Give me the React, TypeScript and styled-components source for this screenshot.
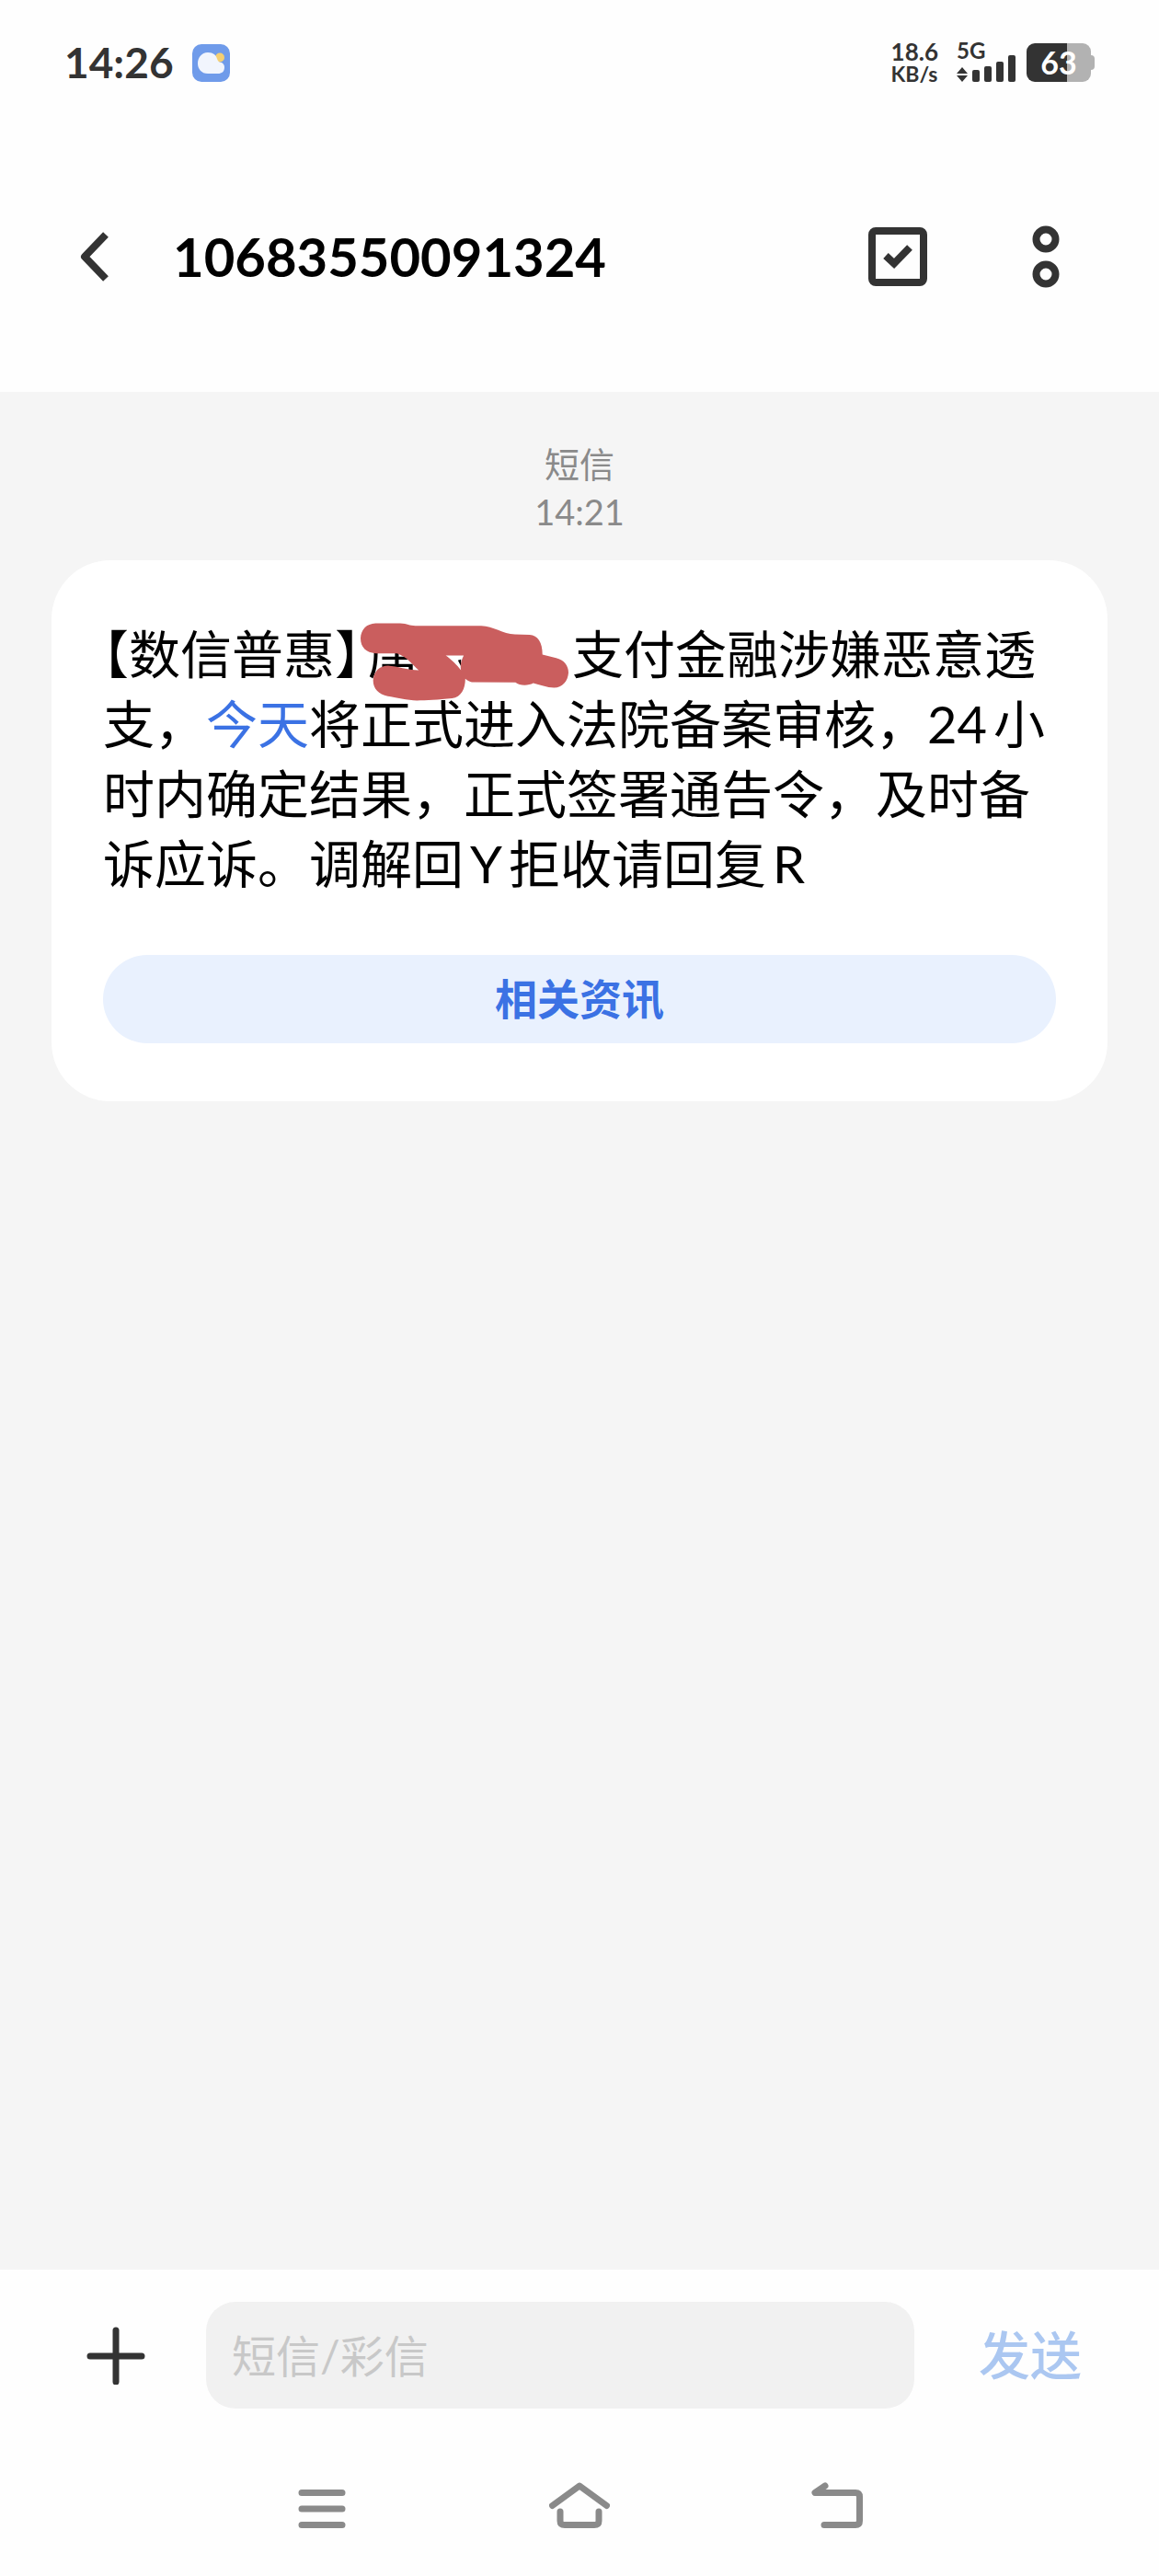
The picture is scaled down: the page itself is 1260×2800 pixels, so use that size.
import React from 'react';
import styled, { createGlobalStyle } from 'styled-components';

const GlobalStyle = createGlobalStyle`
  *, *::before, *::after { box-sizing: border-box; }
  html, body { margin: 0; padding: 0; }
  body {
    background: #fefefe;
    color: #000;
    font-family: Lato, 'Noto Sans CJK SC', sans-serif;
  }
  button, input { font: inherit; border: 0; margin: 0; padding: 0; background: none; }
`;

const Screen = styled.div`
  display: flex;
  flex-direction: column;
  min-height: 100vh;
`;

const StatusBar = styled.div`
  display: flex;
  align-items: center;
  justify-content: space-between;
  height: 136px;
  padding: 0 74px 0 70px;
  color: #333;
  font-weight: 700;
`;

const StatusGroup = styled.div<{ $gap: number }>`
  display: flex;
  align-items: center;
  gap: ${({ $gap }) => $gap}px;
`;

const Clock = styled.time`
  font-size: 46px;
  line-height: 56px;
`;

const Stack = styled.div`
  display: flex;
  flex-direction: column;
`;

const StatusText = styled.span<{ $size: number }>`
  font-size: ${({ $size }) => $size}px;
  line-height: 24px;
`;

const Battery = styled.div`
  position: relative;
  width: 70px;
  height: 42px;
  border-radius: 9px;
  background: linear-gradient(to right, #333 63%, #b2b2b2 63%);
  color: #fff;
  font-size: 34px;
  line-height: 42px;
  text-align: center;
  &::after {
    content: '';
    position: absolute;
    left: 70px;
    top: 13px;
    width: 4px;
    height: 16px;
    border-radius: 0 4px 4px 0;
    background: #b2b2b2;
  }
`;

const Header = styled.header`
  display: flex;
  align-items: center;
  height: 290px;
  padding: 0 91px 4px 70px;
`;

const IconButton = styled.button`
  display: flex;
  align-items: center;
  justify-content: center;
  width: 64px;
  height: 80px;
  flex: none;
`;

const Title = styled.h1`
  flex: 1;
  margin: 0 0 0 54px;
  font-size: 58px;
  line-height: 72px;
  font-weight: 700;
`;

const HeaderActions = styled.div`
  display: flex;
  gap: 97px;
`;

const Thread = styled.main`
  flex: 1;
  padding: 52px 56px;
  background: #f5f5f5;
`;

const Meta = styled.div`
  margin-bottom: 27px;
  color: #8a8a8a;
  font-size: 38px;
  line-height: 52px;
  text-align: center;
`;

const Bubble = styled.article`
  padding: 64px 56px 63px;
  border-radius: 64px;
  background: #fff;
`;

const MessageText = styled.p`
  margin: 0 0 61px;
  font-size: 56px;
  line-height: 76px;
  text-autospace: normal;
`;

const Sender = styled.span`
  font-feature-settings: 'halt';
`;

const DateLink = styled.a`
  color: #3b72e4;
  text-decoration: none;
`;

const Redacted = styled.span`
  position: relative;
  display: inline-block;
  width: 230px;
  height: 76px;
  padding-left: 8px;
  vertical-align: top;
`;

const Scribble = styled.svg`
  position: absolute;
  left: 0;
  top: 4px;
`;

const InfoButton = styled.button`
  display: block;
  width: 100%;
  height: 96px;
  border-radius: 48px;
  background: #e9f1fe;
  color: #3b72e4;
  font-size: 46px;
  line-height: 96px;
  font-weight: 700;
`;

const Composer = styled.form`
  display: flex;
  align-items: center;
  padding: 35px 84px 32px 94px;
`;

const MessageInput = styled.input`
  flex: 1;
  min-width: 0;
  height: 116px;
  margin: 0 70px 0 66px;
  padding: 0 28px;
  border-radius: 32px;
  background: #f1f1f1;
  font-size: 48px;
  color: #000;
  &::placeholder { color: #c8c8c8; opacity: 1; }
`;

const SendButton = styled.button`
  color: #abc7f1;
  font-size: 56px;
  line-height: 76px;
  font-weight: 500;
`;

const NavBar = styled.nav`
  display: grid;
  grid-template-columns: repeat(3, 280px);
  justify-content: center;
  justify-items: center;
  align-items: center;
  height: 150px;
  padding-bottom: 4px;
`;

const NavButton = styled(IconButton)`
  width: 72px;
  height: 72px;
`;

const Signal = styled.div`
  position: relative;
  width: 64px;
  height: 42px;
`;

const NetworkLabel = styled.span`
  position: absolute;
  left: 0;
  top: -4px;
  font-size: 24px;
  line-height: 24px;
`;

const WeatherIcon = () => (
  <svg width="41" height="41" viewBox="0 0 41 41" aria-hidden="true">
    <rect width="41" height="41" rx="10" fill="#6f9bea" />
    <circle cx="30" cy="14.500" r="5" fill="#f4cf72" />
    <path d="M17 9c6 0 9 3 10 7 1 3 3 4 5 4 2 1 3 3 3 5 0 5-3 7-7 7H17C10 32 6 27 6 21S10 9 17 9z" fill="#f1f5fd" />
  </svg>
);

const SignalIcon = () => (
  <svg width="64" height="42" viewBox="0 0 64 42" fill="#333" aria-hidden="true">
    <path d="M6 26l6 7H0zM6 42l6-7H0z" />
    <rect x="17" y="29" width="8" height="13" rx="2" />
    <rect x="30" y="25" width="8" height="17" rx="2" />
    <rect x="43" y="20" width="8" height="22" rx="2" />
    <rect x="56" y="13" width="8" height="29" rx="2" />
  </svg>
);

export default function App() {
  return (
    <Screen>
      <GlobalStyle />
      <StatusBar>
        <StatusGroup $gap={20}>
          <Clock>14:26</Clock>
          <WeatherIcon />
        </StatusGroup>
        <StatusGroup $gap={12}>
          <StatusGroup $gap={20}>
            <Stack>
              <StatusText $size={26}>18.6</StatusText>
              <StatusText $size={23}>KB/s</StatusText>
            </Stack>
            <Signal>
              <SignalIcon />
              <NetworkLabel>5G</NetworkLabel>
            </Signal>
          </StatusGroup>
          <Battery>63</Battery>
        </StatusGroup>
      </StatusBar>

      <Header>
        <IconButton type="button" aria-label="返回">
          <svg width="32" height="54" viewBox="0 0 32 54" fill="none" stroke="#333" strokeWidth="8" strokeLinejoin="round">
            <path d="M29 3L6 27l23 24" />
          </svg>
        </IconButton>
        <Title>10683550091324</Title>
        <HeaderActions>
          <IconButton type="button" aria-label="选择">
            <svg width="64" height="64" viewBox="0 0 64 64" fill="none" stroke="#333" strokeWidth="8">
              <rect x="4" y="4" width="56" height="56" rx="4" />
              <path d="M19 31l9 8.500L45 22" />
            </svg>
          </IconButton>
          <IconButton type="button" aria-label="更多">
            <svg width="30" height="68" viewBox="0 0 30 68" fill="none" stroke="#333" strokeWidth="8">
              <circle cx="15" cy="15" r="10.500" />
              <circle cx="15" cy="53" r="10.500" />
            </svg>
          </IconButton>
        </HeaderActions>
      </Header>

      <Thread>
        <Meta>
          <div>短信</div>
          <time>14:21</time>
        </Meta>
        <Bubble>
          <MessageText>
            <Sender>【数信普惠】</Sender>
            <Redacted>
              唐
              <Scribble width="226" height="85" viewBox="96 110 679 254" aria-hidden="true">
                <path d="M414 232l10-3v22z" fill="#000" />
                <path
                  fill="#ca5e5e"
                  fillRule="evenodd"
                  d="M145 111L225 111C250 112 255 119 275 119L490 119C530 120 560 145 600 147L648 148C675 150 690 172 690 213L735 224C760 230 775 248 775 272C773 300 755 320 728 321C705 321 680 311 660 306C645 315 615 315 602 304L465 303C455 303 445 298 438 292C438 325 425 352 395 356C350 361 310 363 280 363C250 363 210 352 185 349C155 342 137 325 137 297C139 268 158 249 186 249C215 251 250 264 286 264C265 246 250 222 215 209L145 209C115 207 96 190 96 160C97 132 115 112 145 111ZM374 216L433 216C426 230 420 245 424 264C412 248 392 228 374 216Z"
                />
              </Scribble>
            </Redacted>
            支付金融涉嫌恶意透支，<DateLink href="#today">今天</DateLink>将正式进入法院备案审核，24小时内确定结果，正式签署通告令，及时备诉应诉。调解回Y拒收请回复R
          </MessageText>
          <InfoButton type="button">相关资讯</InfoButton>
        </Bubble>
      </Thread>

      <Composer onSubmit={(e) => e.preventDefault()}>
        <IconButton type="button" aria-label="添加">
          <svg width="64" height="64" viewBox="0 0 64 64" fill="none" stroke="#333" strokeWidth="7" strokeLinecap="round">
            <path d="M4 33h56M32 5v56" />
          </svg>
        </IconButton>
        <MessageInput aria-label="短信/彩信" placeholder="短信/彩信" />
        <SendButton type="submit">发送</SendButton>
      </Composer>

      <NavBar>
        <NavButton type="button" aria-label="最近任务">
          <svg width="52" height="50" viewBox="0 0 52 50" fill="none" stroke="#8a8a8a" strokeWidth="7" strokeLinecap="round">
            <path d="M4 11.500h44M4 29h44M4 46.500h44" />
          </svg>
        </NavButton>
        <NavButton type="button" aria-label="主页">
          <svg width="66" height="50" viewBox="0 0 66 50" fill="none" stroke="#8a8a8a" strokeWidth="7" strokeLinecap="round" strokeLinejoin="round">
            <path d="M3.500 25.500L33 4l29.500 21.500M12 32v10q0 4.500 5 4.500h32q5 0 5-4.500V32" />
          </svg>
        </NavButton>
        <NavButton type="button" aria-label="后退">
          <svg width="56" height="50" viewBox="0 0 56 50" fill="none" stroke="#8a8a8a" strokeWidth="7" strokeLinecap="round" strokeLinejoin="round">
            <path d="M15 4L4 11.500h44q4.500 0 4.500 4.500v26q0 4.500-4.500 4.500H14" />
          </svg>
        </NavButton>
      </NavBar>
    </Screen>
  );
}
